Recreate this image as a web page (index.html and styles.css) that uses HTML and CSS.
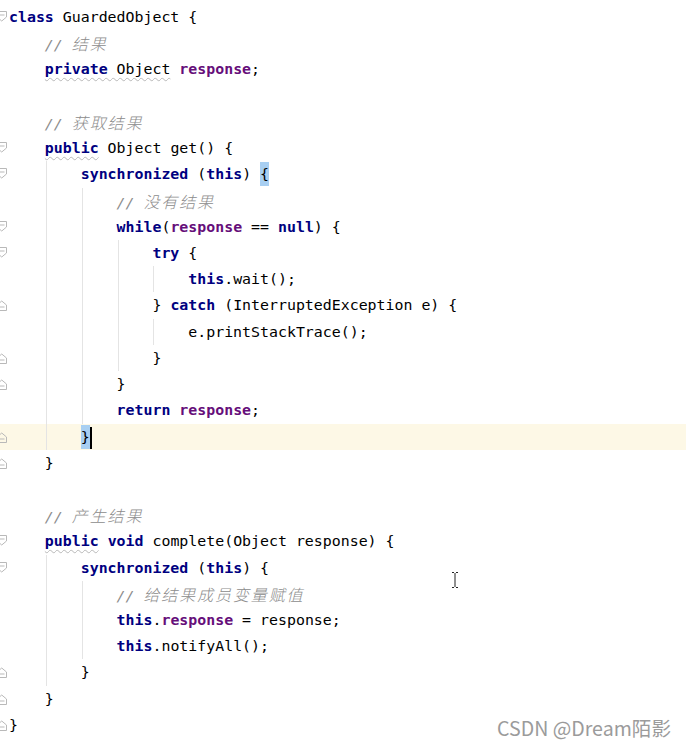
FILE: index.html
```html
<!DOCTYPE html>
<html>
<head>
<meta charset="utf-8">
<link rel="stylesheet" href="styles.css">
</head>
<body>
<div class="editor">
  <div class="ln"><span class="gut"><svg class="fd" viewBox="0 0 9 26"><path d="M-3 7.5H6.5V13L1.75 17L-3 13Z"/><path d="M-1 11H4.5"/></svg></span><span class="t"><b class="k">class</b> GuardedObject {</span></div>
  <div class="ln"><span class="gut"></span><span class="i"></span><span class="t c">// <span class="cjk">结果</span></span></div>
  <div class="ln"><span class="gut"></span><span class="i"></span><span class="t"><span class="wv"><b class="k">private</b> Object</span> <b class="f">response</b>;</span></div>
  <div class="ln"><span class="gut"></span></div>
  <div class="ln"><span class="gut"></span><span class="i"></span><span class="t c">// <span class="cjk">获取结果</span></span></div>
  <div class="ln"><span class="gut"><svg class="fd" viewBox="0 0 9 26"><path d="M-3 7.5H6.5V13L1.75 17L-3 13Z"/><path d="M-1 11H4.5"/></svg></span><span class="i"></span><span class="t"><b class="k wv">public</b> Object get() {</span></div>
  <div class="ln"><span class="gut"><svg class="fd" viewBox="0 0 9 26"><path d="M-3 7.5H6.5V13L1.75 17L-3 13Z"/><path d="M-1 11H4.5"/></svg></span><span class="i"></span><span class="i g"></span><span class="t"><b class="k">synchronized</b> (<b class="k">this</b>) <span class="bm">{</span></span></div>
  <div class="ln"><span class="gut"></span><span class="i"></span><span class="i g"></span><span class="i g"></span><span class="t c">// <span class="cjk">没有结果</span></span></div>
  <div class="ln"><span class="gut"><svg class="fd" viewBox="0 0 9 26"><path d="M-3 7.5H6.5V13L1.75 17L-3 13Z"/><path d="M-1 11H4.5"/></svg></span><span class="i"></span><span class="i g"></span><span class="i g"></span><span class="t"><b class="k">while</b>(<b class="f">response</b> == <b class="k">null</b>) {</span></div>
  <div class="ln"><span class="gut"><svg class="fd" viewBox="0 0 9 26"><path d="M-3 7.5H6.5V13L1.75 17L-3 13Z"/><path d="M-1 11H4.5"/></svg></span><span class="i"></span><span class="i g"></span><span class="i g"></span><span class="i g"></span><span class="t"><b class="k">try</b> {</span></div>
  <div class="ln"><span class="gut"></span><span class="i"></span><span class="i g"></span><span class="i g"></span><span class="i g"></span><span class="i g"></span><span class="t"><b class="k">this</b>.wait();</span></div>
  <div class="ln"><span class="gut"><svg class="fd" viewBox="0 0 9 26"><path d="M-3 18.5H6.5V13L1.75 9L-3 13Z"/><path d="M-1 15H4.5"/></svg></span><span class="i"></span><span class="i g"></span><span class="i g"></span><span class="i g"></span><span class="t">} <b class="k">catch</b> (InterruptedException e) {</span></div>
  <div class="ln"><span class="gut"></span><span class="i"></span><span class="i g"></span><span class="i g"></span><span class="i g"></span><span class="i g"></span><span class="t">e.printStackTrace();</span></div>
  <div class="ln"><span class="gut"><svg class="fd" viewBox="0 0 9 26"><path d="M-3 18.5H6.5V13L1.75 9L-3 13Z"/><path d="M-1 15H4.5"/></svg></span><span class="i"></span><span class="i g"></span><span class="i g"></span><span class="i g"></span><span class="t">}</span></div>
  <div class="ln"><span class="gut"><svg class="fd" viewBox="0 0 9 26"><path d="M-3 18.5H6.5V13L1.75 9L-3 13Z"/><path d="M-1 15H4.5"/></svg></span><span class="i"></span><span class="i g"></span><span class="i g"></span><span class="t">}</span></div>
  <div class="ln"><span class="gut"></span><span class="i"></span><span class="i g"></span><span class="i g"></span><span class="t"><b class="k">return</b> <b class="f">response</b>;</span></div>
  <div class="ln cur"><span class="gut"><svg class="fd" viewBox="0 0 9 26"><path d="M-3 18.5H6.5V13L1.75 9L-3 13Z"/><path d="M-1 15H4.5"/></svg></span><span class="i"></span><span class="i g"></span><span class="t"><span class="bm">}</span><span class="caret"></span></span></div>
  <div class="ln"><span class="gut"><svg class="fd" viewBox="0 0 9 26"><path d="M-3 18.5H6.5V13L1.75 9L-3 13Z"/><path d="M-1 15H4.5"/></svg></span><span class="i"></span><span class="t">}</span></div>
  <div class="ln"><span class="gut"></span></div>
  <div class="ln"><span class="gut"></span><span class="i"></span><span class="t c">// <span class="cjk">产生结果</span></span></div>
  <div class="ln"><span class="gut"><svg class="fd" viewBox="0 0 9 26"><path d="M-3 7.5H6.5V13L1.75 17L-3 13Z"/><path d="M-1 11H4.5"/></svg></span><span class="i"></span><span class="t"><b class="k wv">public</b> <b class="k">void</b> complete(Object response) {</span></div>
  <div class="ln"><span class="gut"><svg class="fd" viewBox="0 0 9 26"><path d="M-3 7.5H6.5V13L1.75 17L-3 13Z"/><path d="M-1 11H4.5"/></svg></span><span class="i"></span><span class="i g"></span><span class="t"><b class="k">synchronized</b> (<b class="k">this</b>) {</span></div>
  <div class="ln"><span class="gut"></span><span class="i"></span><span class="i g"></span><span class="i g"></span><span class="t c">// <span class="cjk">给结果成员变量赋值</span></span></div>
  <div class="ln"><span class="gut"></span><span class="i"></span><span class="i g"></span><span class="i g"></span><span class="t"><b class="k">this</b>.<b class="f">response</b> = response;</span></div>
  <div class="ln"><span class="gut"></span><span class="i"></span><span class="i g"></span><span class="i g"></span><span class="t"><b class="k">this</b>.notifyAll();</span></div>
  <div class="ln"><span class="gut"><svg class="fd" viewBox="0 0 9 26"><path d="M-3 18.5H6.5V13L1.75 9L-3 13Z"/><path d="M-1 15H4.5"/></svg></span><span class="i"></span><span class="i g"></span><span class="t">}</span></div>
  <div class="ln"><span class="gut"><svg class="fd" viewBox="0 0 9 26"><path d="M-3 18.5H6.5V13L1.75 9L-3 13Z"/><path d="M-1 15H4.5"/></svg></span><span class="i"></span><span class="t">}</span></div>
  <div class="ln"><span class="gut"><svg class="fd" viewBox="0 0 9 26"><path d="M-3 18.5H6.5V13L1.75 9L-3 13Z"/><path d="M-1 15H4.5"/></svg></span><span class="t">}</span></div>
</div>
<svg class="ibeam" width="8" height="18" viewBox="0 0 8 18"><path d="M1 1.5H3M5 1.5H7M4 2V16M1 16.5H3M5 16.5H7" stroke="#222" stroke-width="1" fill="none"/></svg>
<div class="wm">CSDN @Dream陌影</div>
</body>
</html>
```
FILE: styles.css
```css
html, body {
  margin: 0;
  padding: 0;
  background: #ffffff;
}
body {
  width: 686px;
  height: 748px;
  overflow: hidden;
  position: relative;
  font-family: "DejaVu Sans Mono", "Liberation Mono", monospace;
  font-size: 14.9px;
  color: #000000;
}
.editor {
  padding-top: 4px;
}
.ln {
  display: flex;
  height: 26.22px;
  align-items: stretch;
}
.ln.cur {
  background: #fdf8e6;
}
.gut {
  width: 9px;
  flex: none;
  overflow: hidden;
  display: flex;
}
.fd {
  width: 9px;
  height: 26px;
  fill: none;
  stroke: #b9b9b9;
  stroke-width: 1;
}
.i {
  width: 4ch;
  flex: none;
}
.i.g {
  background: linear-gradient(#e4e4e4, #e4e4e4) no-repeat 1px 0 / 1px 100%;
}
.t {
  white-space: pre;
  line-height: 26.22px;
}
.k {
  color: #000080;
  font-weight: bold;
}
.f {
  color: #660e7a;
  font-weight: bold;
}
.c {
  color: #8c8c8c;
  font-style: italic;
}
.cjk {
  font-family: "Noto Sans CJK SC", sans-serif;
  font-size: 16px;
  letter-spacing: 1.88px;
  font-weight: 300;
}
.wv {
  text-decoration: underline wavy #b8b8b8;
  text-decoration-thickness: 1px;
  text-underline-offset: 3px;
}
.bm {
  background: #a8cff2;
  padding: 3px 0;
}
.caret {
  display: inline-block;
  width: 2px;
  height: 22px;
  background: #000000;
  vertical-align: middle;
}
.ibeam {
  position: absolute;
  left: 451px;
  top: 571px;
}
.wm {
  position: absolute;
  left: 497px;
  top: 713px;
  font-family: "Noto Sans CJK SC", "Noto Sans", sans-serif;
  font-size: 19.6px;
  color: #9b9b9b;
  text-shadow: 0 0 1px #ffffff;
  white-space: nowrap;
}
```
